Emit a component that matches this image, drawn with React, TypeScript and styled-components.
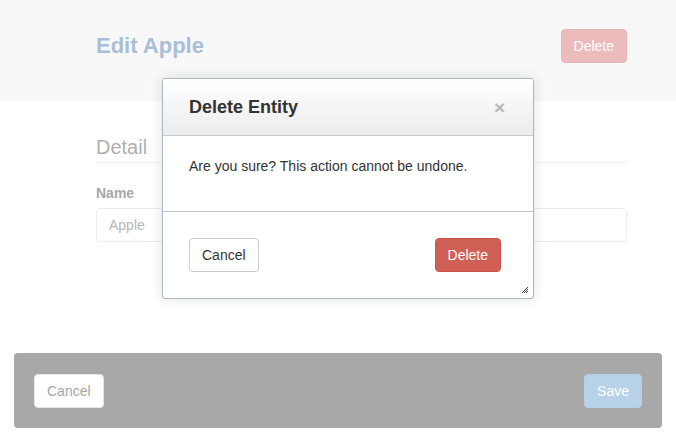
import React from "react";
import styled, { createGlobalStyle } from "styled-components";

const Global = createGlobalStyle`
  html, body { margin: 0; padding: 0; background: #ffffff; }
  body { font-family: "Liberation Sans", Arial, sans-serif; width: 676px; height: 442px; overflow: hidden; }
  * { box-sizing: border-box; }
`;

const Page = styled.div`
  position: relative;
  width: 676px;
  height: 442px;
  background: #ffffff;
`;

const Header = styled.header`
  height: 101px;
  background: #f8f8f8;
  display: flex;
  align-items: center;
  justify-content: space-between;
  padding: 0 49px 9px 96px;
`;

const Title = styled.h1`
  margin: 0;
  font-size: 22px;
  font-weight: bold;
  color: #a9bfd7;
`;

const Button = styled.button<{ $variant: "danger" | "primary" | "default" | "faded-danger" | "faded-default" }>`
  height: 34px;
  padding: 0 12px;
  border-radius: 4px;
  font-family: "Liberation Sans", Arial, sans-serif;
  font-size: 14px;
  cursor: pointer;
  border: 1px solid
    ${(p) =>
      p.$variant === "danger"
        ? "#c9534a"
        : p.$variant === "primary"
        ? "#b5cfe6"
        : p.$variant === "faded-danger"
        ? "#e9b6b4"
        : p.$variant === "faded-default"
        ? "#e6e6e6"
        : "#cccccc"};
  background: ${(p) =>
    p.$variant === "danger"
      ? "#d05f55"
      : p.$variant === "primary"
      ? "#b7d1e8"
      : p.$variant === "faded-danger"
      ? "#ebbcbb"
      : "#ffffff"};
  color: ${(p) =>
    p.$variant === "default" ? "#333333" : p.$variant === "faded-default" ? "#a6a6a6" : "#ffffff"};
`;

const Content = styled.section`
  padding: 35px 49px 0 96px;
`;

const SectionTitle = styled.h2`
  margin: 0;
  font-size: 20px;
  font-weight: normal;
  color: #b0b0b0;
  padding-bottom: 3px;
  border-bottom: 1px solid #f0f0f0;
`;

const Label = styled.label`
  display: block;
  margin-top: 22px;
  font-size: 14px;
  font-weight: bold;
  color: #a8a8a8;
`;

const Input = styled.div`
  margin-top: 7px;
  height: 34px;
  border: 1px solid #ececec;
  border-radius: 4px;
  padding: 0 12px;
  display: flex;
  align-items: center;
  font-size: 14px;
  color: #b6b6b6;
`;

const Footer = styled.footer`
  position: absolute;
  left: 14px;
  top: 353px;
  width: 648px;
  height: 75px;
  background: #a7a8a7;
  border-radius: 4px;
  display: flex;
  align-items: center;
  justify-content: space-between;
  padding: 0 20px;
`;

const Modal = styled.div`
  position: absolute;
  left: 162px;
  top: 78px;
  width: 372px;
  height: 221px;
  background: #ffffff;
  border: 1px solid #a9b7c6;
  border-radius: 3px;
  box-shadow: 0 0 14px rgba(0, 0, 0, 0.12);
  display: flex;
  flex-direction: column;
  overflow: hidden;
`;

const ModalHeader = styled.div`
  height: 57px;
  background: linear-gradient(#ffffff, #ececec);
  border-bottom: 1px solid #c9ccd0;
  display: flex;
  align-items: center;
  justify-content: space-between;
  padding: 0 28px 0 26px;
`;

const ModalTitle = styled.h3`
  margin: 0;
  font-size: 18px;
  font-weight: bold;
  color: #333333;
`;

const Close = styled.span`
  font-size: 19px;
  font-weight: bold;
  color: #b8b8b8;
  line-height: 1;
`;

const ModalBody = styled.div`
  height: 76px;
  border-bottom: 1px solid #c3c8cf;
  padding: 22px 26px 0;
  font-size: 14px;
  color: #333333;
`;

const ModalFooter = styled.div`
  flex: 1;
  position: relative;
  display: flex;
  align-items: flex-start;
  justify-content: space-between;
  padding: 26px 32px 0 26px;
`;

const Grip = styled.svg`
  position: absolute;
  right: 4px;
  bottom: 4px;
`;

export default function App() {
  return (
    <>
      <Global />
      <Page>
        <Header>
          <Title>Edit Apple</Title>
          <Button $variant="faded-danger">Delete</Button>
        </Header>
        <Content>
          <SectionTitle>Detail</SectionTitle>
          <Label>Name</Label>
          <Input>Apple</Input>
        </Content>
        <Footer>
          <Button $variant="faded-default">Cancel</Button>
          <Button $variant="primary">Save</Button>
        </Footer>
        <Modal>
          <ModalHeader>
            <ModalTitle>Delete Entity</ModalTitle>
            <Close>×</Close>
          </ModalHeader>
          <ModalBody>Are you sure? This action cannot be undone.</ModalBody>
          <ModalFooter>
            <Button $variant="default">Cancel</Button>
            <Button $variant="danger">Delete</Button>
            <Grip width="8" height="8" viewBox="0 0 8 8">
              <path d="M7 1 L1 7 M7 3 L3 7 M7 5 L5 7" stroke="#444" strokeWidth="1" />
            </Grip>
          </ModalFooter>
        </Modal>
      </Page>
    </>
  );
}
